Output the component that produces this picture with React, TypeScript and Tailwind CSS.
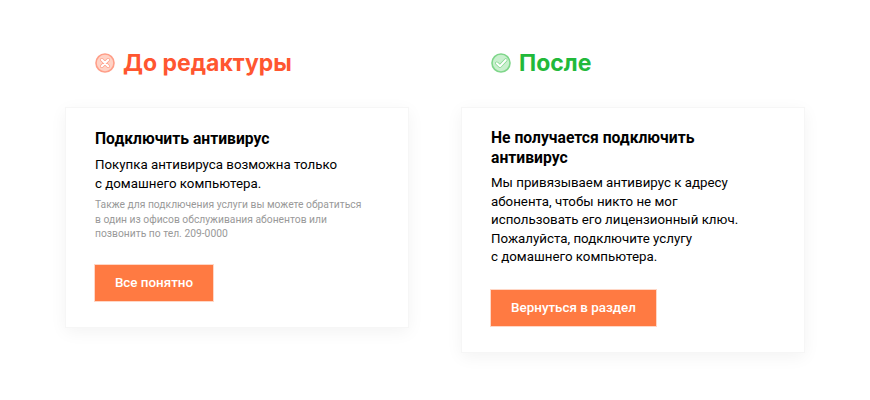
const cardClass =
  "w-[344px] bg-white px-[29px] shadow-[0_4px_16px_rgba(0,0,0,0.05)] border border-[#f6f6f6]";
const btnClass =
  "flex h-[36px] items-center justify-center bg-[#ff7a42] text-[13.4px] font-medium text-white shadow-[0_0_0_1px_rgba(255,122,66,0.3)]";

function CrossIcon() {
  return (
    <svg viewBox="0 0 20 20" className="-mt-px h-5 w-5 shrink-0" fill="none">
      <circle cx="10" cy="10" r="9" fill="#ffd3c6" stroke="#ff9e88" strokeWidth="1.6" />
      <path d="M6.8 6.8l6.4 6.4M13.2 6.8l-6.4 6.4" stroke="#ff9e88" strokeWidth="3.6" strokeLinecap="round" />
      <path d="M6.8 6.8l6.4 6.4M13.2 6.8l-6.4 6.4" stroke="#fff" strokeWidth="2.2" strokeLinecap="round" />
    </svg>
  );
}

function CheckIcon() {
  return (
    <svg viewBox="0 0 20 20" className="-mt-px h-5 w-5 shrink-0" fill="none">
      <circle cx="10" cy="10" r="9" fill="#c9f0ce" stroke="#7fd68a" strokeWidth="1.6" />
      <path d="M5.8 10.2l3.2 3 5.8-6.2" stroke="#7fd68a" strokeWidth="3.4" strokeLinecap="round" strokeLinejoin="round" />
      <path d="M5.8 10.2l3.2 3 5.8-6.2" stroke="#fff" strokeWidth="2" strokeLinecap="round" strokeLinejoin="round" />
    </svg>
  );
}

export default function App() {
  return (
    <div className="flex h-[400px] w-[870px] gap-[52px] bg-white pl-[65px] pt-[49px] font-['Roboto',sans-serif] text-black">
      <div className="w-[344px]">
        <div className="flex h-[28px] items-center gap-[8px] pl-[30px]">
          <CrossIcon />
          <h2 className="font-['Inter',sans-serif] text-[23px] font-bold text-[#ff5630]">До редактуры</h2>
        </div>
        <div className={`${cardClass} mt-[30px] h-[221px] pt-[21px]`}>
          <h3 className="text-[15.7px] leading-[20px] font-bold">Подключить антивирус</h3>
          <p className="mt-[6px] text-[13.3px] leading-[19px]">
            Покупка антивируса возможна только
            <br />с домашнего компьютера.
          </p>
          <p className="mt-[5px] text-[10.3px] leading-[14.6px] text-[#999999]">
            Также для подключения услуги вы можете обратиться
            <br />в один из офисов обслуживания абонентов или
            <br />позвонить по тел. 209-0000
          </p>
          <div className={`${btnClass} mt-[23px] w-[118px]`}>Все понятно</div>
        </div>
      </div>

      <div className="w-[344px]">
        <div className="flex h-[28px] items-center gap-[8px] pl-[30px]">
          <CheckIcon />
          <h2 className="font-['Inter',sans-serif] text-[23px] font-bold text-[#22b93a]">После</h2>
        </div>
        <div className={`${cardClass} mt-[30px] h-[246px] pt-[20px]`}>
          <h3 className="w-[260px] text-[15.7px] leading-[19.5px] font-bold">Не получается подключить антивирус</h3>
          <p className="mt-[7px] text-[13.3px] leading-[18.6px]">
            Мы привязываем антивирус к адресу
            <br />абонента, чтобы никто не мог
            <br />использовать его лицензионный ключ.
            <br />Пожалуйста, подключите услугу
            <br />с домашнего компьютера.
          </p>
          <div className={`${btnClass} mt-[23px] w-[165px]`}>Вернуться в раздел</div>
        </div>
      </div>
    </div>
  );
}
